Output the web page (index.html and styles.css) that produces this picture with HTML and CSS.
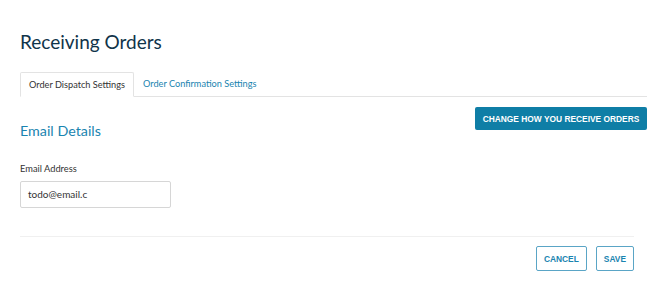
FILE: index.html
```html
<!DOCTYPE html>
<html>
<head>
<meta charset="utf-8">
<link rel="stylesheet" href="styles.css">
</head>
<body>
<div class="page">
  <h1 class="title">Receiving Orders</h1>
  <div class="tabs">
    <div class="tab active">Order Dispatch Settings</div>
    <div class="tab">Order Confirmation Settings</div>
  </div>
  <div class="section">
    <div class="section-head">
      <h2 class="section-title">Email Details</h2>
      <button class="btn-primary">CHANGE HOW YOU RECEIVE ORDERS</button>
    </div>
    <label class="label">Email Address</label>
    <div class="input">todo@email.c</div>
  </div>
  <div class="footer">
    <button class="btn-outline">CANCEL</button>
    <button class="btn-outline">SAVE</button>
  </div>
</div>
</body>
</html>
```
FILE: styles.css
```css
* { box-sizing: border-box; }
body { margin: 0; background: #fff; font-family: Lato, "Open Sans", sans-serif; }
.page { padding: 0 23px 0 20px; }
.title { margin: 0; padding-top: 31px; font-size: 19px; font-weight: 400; color: #10344a; line-height: 22px; height: 72px; }
.tabs { display: flex; border-bottom: 1px solid #e3e3e3; height: 25px; }
.tab { font-size: 9.2px; color: #1a84b0; padding: 0 9px; line-height: 24px; white-space: nowrap; }
.tab.active { color: #333; border: 1px solid #e3e3e3; border-bottom: 1px solid #fff; border-radius: 2px 2px 0 0; margin-bottom: -1px; padding: 0 8px; height: 25px; }
.section-head { display: flex; justify-content: space-between; align-items: flex-start; padding-top: 10px; }
.section-title { margin: 0; font-size: 14.3px; font-weight: 400; color: #1a84b0; padding-top: 15px; line-height: 18px; }
.btn-primary { background: #0f7ea6; color: #fff; border: none; border-radius: 2px; font-family: "Liberation Sans", Arial, sans-serif; font-weight: 700; font-size: 8.4px; height: 23px; width: 172px; padding: 0; }
.label { display: block; font-size: 9.3px; color: #333; margin-top: 23px; line-height: 12px; }
.input { margin-top: 6px; width: 151px; height: 27px; border: 1px solid #d6d6d6; border-radius: 2px; font-size: 10px; color: #333; padding: 0 7px; line-height: 25px; }
.footer { display: flex; justify-content: flex-end; gap: 9px; border-top: 1px solid #f0f0f0; margin-top: 28px; padding-top: 9px; margin-right: 13px; }
.btn-outline { background: #fff; border: 1.5px solid #5aa5c6; color: #1a84b0; font-family: "Liberation Sans", Arial, sans-serif; font-weight: 700; font-size: 8.4px; height: 25px; padding: 0 7px; border-radius: 2px; }
```
